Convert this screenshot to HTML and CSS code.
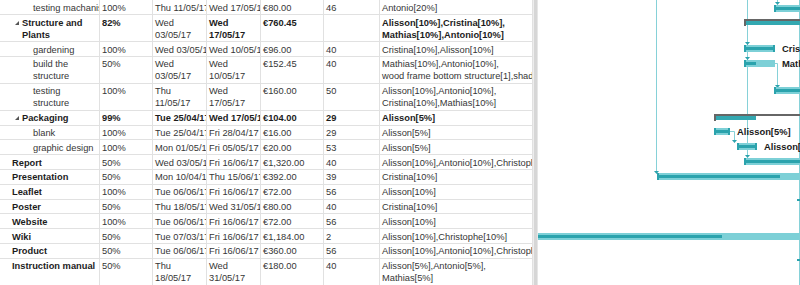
FILE: index.html
```html
<!DOCTYPE html>
<html lang="en">

<head>
    <meta charset="UTF-8">
    <title>Project plan</title>
    <link rel="stylesheet" href="styles.css">
</head>

<body>
    <div class="view">
        <div class="sheet">
            <div class="row first">
                <div class="cell sub">testing machanisms</div>
                <div class="cell">100%</div>
                <div class="cell">Thu 11/05/17</div>
                <div class="cell">Wed 17/05/17</div>
                <div class="cell">€80.00</div>
                <div class="cell">46</div>
                <div class="cell">Antonio[20%]</div>
            </div>
            <div class="row tall summary">
                <div class="cell top b"><span class="tri"></span>Structure and<br><span class="pad">Plants</span></div>
                <div class="cell b">82%</div>
                <div class="cell">Wed<br>03/05/17</div>
                <div class="cell b">Wed<br>17/05/17</div>
                <div class="cell b">€760.45</div>
                <div class="cell"></div>
                <div class="cell b">Alisson[10%],Cristina[10%],<br>Mathias[10%],Antonio[10%]</div>
            </div>
            <div class="row">
                <div class="cell sub">gardening</div>
                <div class="cell">100%</div>
                <div class="cell">Wed 03/05/17</div>
                <div class="cell">Wed 10/05/17</div>
                <div class="cell">€96.00</div>
                <div class="cell">40</div>
                <div class="cell">Cristina[10%],Alisson[10%]</div>
            </div>
            <div class="row tall">
                <div class="cell sub">build the<br>structure</div>
                <div class="cell">50%</div>
                <div class="cell">Wed<br>03/05/17</div>
                <div class="cell">Wed<br>10/05/17</div>
                <div class="cell">€152.45</div>
                <div class="cell">40</div>
                <div class="cell">Mathias[10%],Antonio[10%],<br>wood frame bottom structure[1],shadow net[1]</div>
            </div>
            <div class="row tall">
                <div class="cell sub">testing<br>structure</div>
                <div class="cell">100%</div>
                <div class="cell">Thu<br>11/05/17</div>
                <div class="cell">Wed<br>17/05/17</div>
                <div class="cell">€160.00</div>
                <div class="cell">50</div>
                <div class="cell">Alisson[10%],Antonio[10%],<br>Cristina[10%],Mathias[10%]</div>
            </div>
            <div class="row summary">
                <div class="cell top b"><span class="tri"></span>Packaging</div>
                <div class="cell b">99%</div>
                <div class="cell b">Tue 25/04/17</div>
                <div class="cell b">Wed 17/05/17</div>
                <div class="cell b">€104.00</div>
                <div class="cell b">29</div>
                <div class="cell b">Alisson[5%]</div>
            </div>
            <div class="row">
                <div class="cell sub">blank</div>
                <div class="cell">100%</div>
                <div class="cell">Tue 25/04/17</div>
                <div class="cell">Fri 28/04/17</div>
                <div class="cell">€16.00</div>
                <div class="cell">29</div>
                <div class="cell">Alisson[5%]</div>
            </div>
            <div class="row">
                <div class="cell sub">graphic design</div>
                <div class="cell">100%</div>
                <div class="cell">Mon 01/05/17</div>
                <div class="cell">Fri 05/05/17</div>
                <div class="cell">€20.00</div>
                <div class="cell">53</div>
                <div class="cell">Alisson[5%]</div>
            </div>
            <div class="row">
                <div class="cell task b">Report</div>
                <div class="cell">50%</div>
                <div class="cell">Wed 03/05/17</div>
                <div class="cell">Fri 16/06/17</div>
                <div class="cell">€1,320.00</div>
                <div class="cell">40</div>
                <div class="cell">Alisson[10%],Antonio[10%],Christophe[10%]</div>
            </div>
            <div class="row">
                <div class="cell task b">Presentation</div>
                <div class="cell">50%</div>
                <div class="cell">Mon 10/04/17</div>
                <div class="cell">Thu 15/06/17</div>
                <div class="cell">€392.00</div>
                <div class="cell">39</div>
                <div class="cell">Cristina[10%]</div>
            </div>
            <div class="row">
                <div class="cell task b">Leaflet</div>
                <div class="cell">100%</div>
                <div class="cell">Tue 06/06/17</div>
                <div class="cell">Fri 16/06/17</div>
                <div class="cell">€72.00</div>
                <div class="cell">56</div>
                <div class="cell">Alisson[10%]</div>
            </div>
            <div class="row">
                <div class="cell task b">Poster</div>
                <div class="cell">50%</div>
                <div class="cell">Thu 18/05/17</div>
                <div class="cell">Wed 31/05/17</div>
                <div class="cell">€80.00</div>
                <div class="cell">40</div>
                <div class="cell">Cristina[10%]</div>
            </div>
            <div class="row">
                <div class="cell task b">Website</div>
                <div class="cell">100%</div>
                <div class="cell">Tue 06/06/17</div>
                <div class="cell">Fri 16/06/17</div>
                <div class="cell">€72.00</div>
                <div class="cell">56</div>
                <div class="cell">Alisson[10%]</div>
            </div>
            <div class="row">
                <div class="cell task b">Wiki</div>
                <div class="cell">50%</div>
                <div class="cell">Tue 07/03/17</div>
                <div class="cell">Fri 16/06/17</div>
                <div class="cell">€1,184.00</div>
                <div class="cell">2</div>
                <div class="cell">Alisson[10%],Christophe[10%]</div>
            </div>
            <div class="row">
                <div class="cell task b">Product</div>
                <div class="cell">50%</div>
                <div class="cell">Tue 06/06/17</div>
                <div class="cell">Fri 16/06/17</div>
                <div class="cell">€360.00</div>
                <div class="cell">56</div>
                <div class="cell">Alisson[10%],Antonio[10%],Christophe[10%]</div>
            </div>
            <div class="row tall">
                <div class="cell task b">Instruction manual</div>
                <div class="cell">50%</div>
                <div class="cell">Thu<br>18/05/17</div>
                <div class="cell">Wed<br>31/05/17</div>
                <div class="cell">€180.00</div>
                <div class="cell">40</div>
                <div class="cell">Alisson[5%],Antonio[5%],<br>Mathias[5%]</div>
            </div>
        </div>

        <div class="split"></div>

        <div class="chart">
            <svg width="262" height="285" viewBox="538 0 262 285">
                <!-- links -->
                <g class="link">
                    <path d="M656.5 0V171" />
                    <path d="M747.5 0V155" />
                    <path d="M799.5 0V285" />
                    <path d="M777.5 0V2" />
                    <path d="M775 63.5H777.5V85" />
                    <path d="M730 131.5H734.5V140" />
                </g>
                <g class="arrow">
                    <path d="M654 171h5l-2.5 3z" />
                    <path d="M745 42h5l-2.5 3z" />
                    <path d="M745 57h5l-2.5 3z" />
                    <path d="M745 155h5l-2.5 3z" />
                    <path d="M775 2h5l-2.5 3z" />
                    <path d="M775 85h5l-2.5 3z" />
                    <path d="M732 140h5l-2.5 3z" />
                    <path d="M797 199h3v2h-3z" />
                    <path d="M797 259h3v2h-3z" />
                </g>

                <!-- summary bars -->
                <g class="sum">
                    <rect x="744" y="19" width="56" height="2" />
                    <rect x="744" y="19" width="2" height="7" />
                    <rect x="714" y="114" width="86" height="2" />
                    <rect x="714" y="114" width="2" height="7" />
                </g>
                <g class="sumdone">
                    <rect x="746" y="21" width="54" height="4" />
                    <rect x="716" y="116" width="40" height="4" />
                </g>

                <!-- task bars -->
                <g class="bar">
                    <rect x="774" y="5" width="26" height="7" />
                    <rect x="744" y="45" width="31" height="7" />
                    <rect x="744" y="60" width="31" height="7" />
                    <rect x="774" y="87" width="26" height="7" />
                    <rect x="714" y="128" width="16" height="7" />
                    <rect x="737" y="143" width="20" height="7" />
                    <rect x="744" y="158" width="56" height="7" />
                    <rect x="657" y="173" width="143" height="7" />
                    <rect x="538" y="233" width="262" height="7" />
                </g>
                <g class="done">
                    <rect x="774" y="7" width="26" height="3" />
                    <rect x="774" y="5" width="2" height="7" />
                    <rect x="744" y="47" width="31" height="3" />
                    <rect x="744" y="45" width="2" height="7" />
                    <rect x="773" y="45" width="2" height="7" />
                    <rect x="744" y="62" width="12" height="3" />
                    <rect x="744" y="60" width="2" height="7" />
                    <rect x="774" y="89" width="26" height="3" />
                    <rect x="774" y="87" width="2" height="7" />
                    <rect x="714" y="130" width="16" height="3" />
                    <rect x="714" y="128" width="2" height="7" />
                    <rect x="728" y="128" width="2" height="7" />
                    <rect x="737" y="145" width="20" height="3" />
                    <rect x="737" y="143" width="2" height="7" />
                    <rect x="755" y="143" width="2" height="7" />
                    <rect x="744" y="160" width="56" height="3" />
                    <rect x="744" y="158" width="2" height="7" />
                    <rect x="657" y="175" width="123" height="3" />
                    <rect x="657" y="173" width="2" height="7" />
                    <rect x="538" y="235" width="184" height="3" />
                </g>

                <!-- resource labels -->
                <g class="label">
                    <text x="782" y="51.5">Cristina[10%],Alisson[10%]</text>
                    <text x="782" y="66.5">Mathias[10%],Antonio[10%]</text>
                    <text x="737" y="134.5">Alisson[5%]</text>
                    <text x="764" y="149.5">Alisson[5%]</text>
                </g>
            </svg>
        </div>
    </div>
</body>

</html>
```

FILE: styles.css
```css
* {
    box-sizing: border-box;
}

body {
    margin: 0;
    background: #fff;
    color: #363636;
    font-family: "Liberation Sans", Arial, sans-serif;
    font-size: 9.3px;
}

.view {
    display: flex;
    width: 800px;
    height: 285px;
    overflow: hidden;
}

.sheet {
    width: 533px;
    flex: none;
}

.row {
    display: grid;
    grid-template-columns: 100px 53px 54px 54px 63px 56px 153px;
    height: 14.8px;
    border-bottom: 1px solid #e1e1e1;
}

.row.first {
    height: 15px;
}

.row.tall {
    height: 27px;
}

.cell {
    padding: 1.5px 0 0 2px;
    line-height: 12px;
    white-space: nowrap;
    overflow: hidden;
    border-right: 1px solid #e1e1e1;
}

.cell.b {
    font-weight: bold;
    color: #1c1c1c;
}

.cell.sub {
    padding-left: 33px;
}

.cell.task {
    padding-left: 12px;
}

.cell.top {
    padding-left: 15px;
}

.cell.top .pad {
    padding-left: 7px;
}

.tri {
    display: inline-block;
    width: 0;
    height: 0;
    margin: 0 3px 1px 0;
    border-style: solid;
    border-width: 0 0 4px 4px;
    border-color: transparent transparent #555 transparent;
}

.split {
    width: 5px;
    flex: none;
    background: #d6d6d6;
    border-left: 1px solid #ededed;
    border-right: 1px solid #e6e6e6;
}

.chart {
    flex: 1;
}

.chart svg {
    display: block;
}

.link path {
    fill: none;
    stroke: #86d1d8;
    stroke-width: 1;
}

.arrow path {
    fill: #2ba3ad;
}

.sum rect {
    fill: #666;
}

.sumdone rect {
    fill: #33a8b1;
}

.bar rect {
    fill: #7dd0d7;
}

.done rect {
    fill: #2ba3ad;
}

.label text {
    font-family: "Liberation Sans", Arial, sans-serif;
    font-size: 9.4px;
    font-weight: bold;
    fill: #1a1a1a;
}
```
